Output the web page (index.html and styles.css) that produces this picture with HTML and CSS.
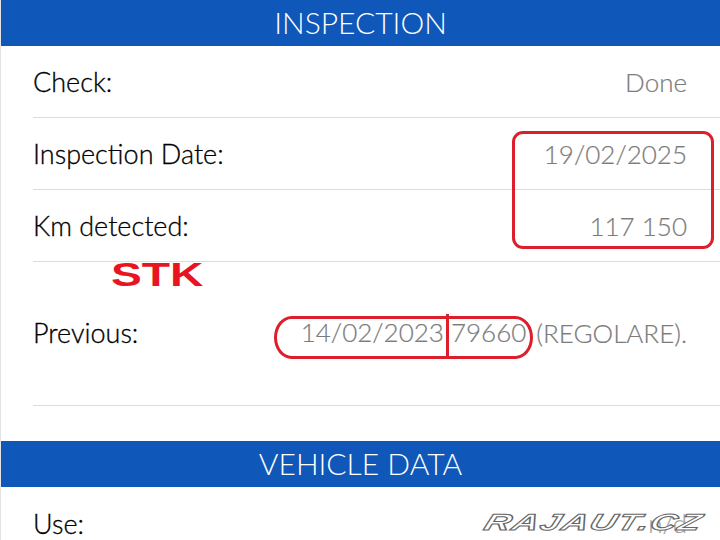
FILE: index.html
```html
<!DOCTYPE html>
<html>
<head>
<meta charset="utf-8">
<link rel="stylesheet" href="styles.css">
</head>
<body>
<div class="screen">
  <div class="section-head">INSPECTION</div>
  <div class="list">
    <div class="row"><span class="label">Check:</span><span class="value">Done</span></div>
    <div class="highlight-group">
      <div class="row"><span class="label">Inspection Date:</span><span class="value">19/02/2025</span></div>
      <div class="row"><span class="label">Km detected:</span><span class="value">117 150</span></div>
      <div class="box box-a"></div>
    </div>
    <div class="row row-tall">
      <span class="stamp">STK</span>
      <span class="label">Previous:</span>
      <span class="value prev">
        <span class="ring"><span class="ring-part ring-left">14/02/2023</span><span class="ring-part ring-right">79660</span></span>(REGOLARE).
      </span>
    </div>
  </div>
  <div class="spacer"></div>
  <div class="section-head">VEHICLE DATA</div>
  <div class="list">
    <div class="row row-last"><span class="label">Use:</span><span class="value faint">n/d</span></div>
  </div>
  <div class="watermark">RAJAUT.CZ</div>
</div>
</body>
</html>
```
FILE: styles.css
```css
* { box-sizing: border-box; }
html, body { margin: 0; padding: 0; background: #fff; }
body { width: 720px; height: 540px; overflow: hidden; font-family: Lato, "Open Sans", sans-serif; }
.screen { position: relative; width: 720px; height: 540px; border-left: 1px solid #e4e4e4; overflow: hidden; }
.section-head {
  height: 46px;
  background: #0f57b8;
  color: #fff;
  font-weight: 300;
  font-size: 30px;
  display: flex;
  align-items: center;
  justify-content: center;
  padding-bottom: 2px;
}
.list { padding-left: 32px; }
.row {
  height: 72px;
  border-bottom: 1px solid #dcdcdc;
  display: flex;
  align-items: center;
  justify-content: space-between;
  padding-right: 33px;
  font-size: 27px;
  font-weight: 300;
  position: relative;
}
.label { color: #000; -webkit-text-stroke: 0.3px #000; }
.value { color: #7c7c7c; font-size: 26px; -webkit-text-stroke: 0.2px #7c7c7c; }
.highlight-group { position: relative; }
.box {
  position: absolute;
  border: 3px solid #dc1f2b;
  border-radius: 11px;
}
.box-a { left: 479px; top: 13px; width: 202px; height: 118px; }
.row-tall { height: 144px; padding-bottom: 2px; }
.stamp {
  position: absolute;
  left: 78px;
  top: -7px;
  color: #e8141f;
  font-family: "Liberation Sans", Arial, sans-serif;
  font-weight: 700;
  font-size: 34px;
  transform: scaleX(1.36);
  transform-origin: left center;
}
.prev { display: flex; align-items: center; }
.ring {
  position: relative;
  display: inline-flex;
  border: 3px solid #dc1f2b;
  border-radius: 18px / 22px;
  margin-right: 3px;
  margin-top: 10px;
}
.ring-part { display: inline-block; padding: 2px 0 8px; margin-top: -5px; }
.ring-left { padding-left: 24px; padding-right: 2px; }
.ring-right { border-left: 3px solid #dc1f2b; padding-left: 2px; padding-right: 4px; }
.spacer { height: 35px; }
.row-last { border-bottom: none; }
.faint { color: #b0b0b0; }
.watermark {
  position: absolute;
  left: 484px;
  top: 509px;
  font-family: "Liberation Sans", Arial, sans-serif;
  font-weight: 700;
  font-style: italic;
  font-size: 23px;
  letter-spacing: 1px;
  color: #fff;
  -webkit-text-stroke: 1px #666;
  transform: scaleX(1.58) skewX(-12deg);
  transform-origin: left center;
}
```
